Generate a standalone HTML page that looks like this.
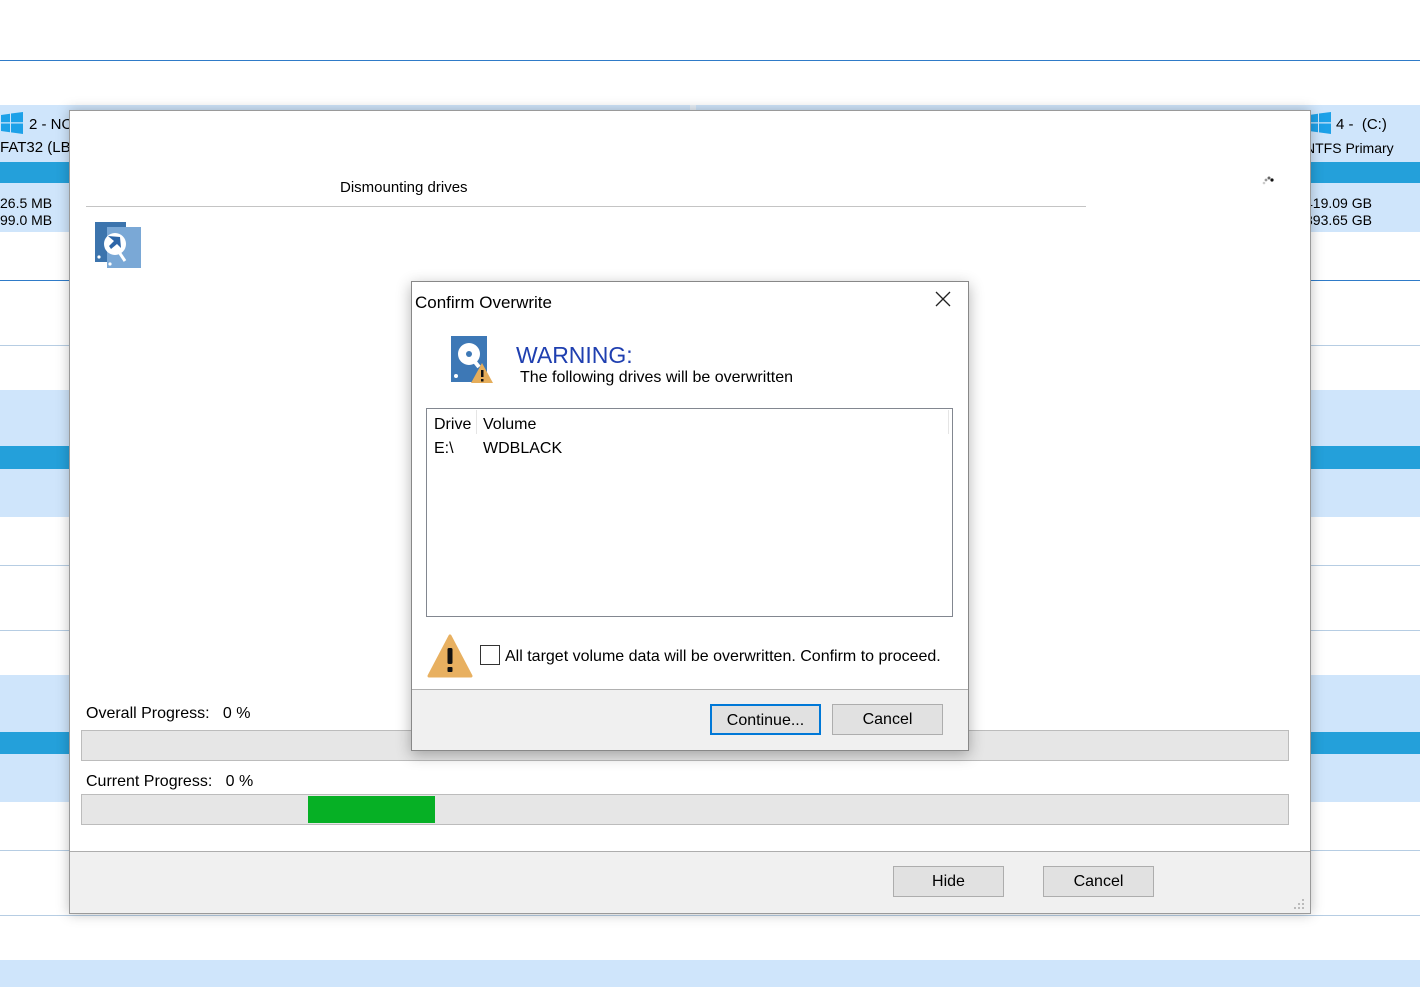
<!DOCTYPE html>
<html><head><meta charset="utf-8"><style>
*{margin:0;padding:0;box-sizing:border-box}
body{width:1420px;height:987px;position:relative;overflow:hidden;background:#fff;font-family:"Liberation Sans",sans-serif;color:#000}
.a{position:absolute}
.t{position:absolute;white-space:nowrap;font-size:15px;line-height:18px;margin-top:2px}
.lb{background:#cfe5fb}
.db{background:#24a0da}
.ln{height:1px;background:#b6cde3}
.btn{position:absolute;background:#e1e1e1;border:1px solid #adadad;font-size:16px;text-align:center;line-height:30px}
</style></head><body>
<div class="a" style="left:0;top:60px;width:1420px;height:1px;background:#2f7bc8"></div>
<div class="a lb" style="left:0;top:105px;width:1420px;height:57px"></div>
<div class="a" style="left:690px;top:105px;width:6px;height:6px;background:#e8f0f8"></div>
<div class="a db" style="left:0;top:162px;width:1420px;height:21px"></div>
<div class="a lb" style="left:0;top:183px;width:1420px;height:49px"></div>
<div class="a" style="left:0;top:280px;width:1420px;height:1px;background:#2f7bc8"></div>
<div class="a ln" style="left:0;top:345px;width:1420px"></div>
<div class="a lb" style="left:0;top:390px;width:1420px;height:56px"></div>
<div class="a db" style="left:0;top:446px;width:1420px;height:23px"></div>
<div class="a lb" style="left:0;top:469px;width:1420px;height:48px"></div>
<div class="a ln" style="left:0;top:565px;width:1420px"></div>
<div class="a ln" style="left:0;top:630px;width:1420px"></div>
<div class="a lb" style="left:0;top:675px;width:1420px;height:57px"></div>
<div class="a db" style="left:0;top:732px;width:1420px;height:22px"></div>
<div class="a lb" style="left:0;top:754px;width:1420px;height:48px"></div>
<div class="a ln" style="left:0;top:850px;width:1420px"></div>
<div class="a ln" style="left:0;top:915px;width:1420px"></div>
<div class="a lb" style="left:0;top:960px;width:1420px;height:27px"></div>
<svg class="a" style="left:1px;top:112px" width="22" height="22"><g fill="#1da1e8"><path d="M0 3l9-1.3v8.5H0z"/><path d="M10 1.5L22 0v10.2H10z"/><path d="M0 11.5h9v8.7L0 19z"/><path d="M10 11.5h12V22l-12-1.6z"/></g></svg>
<div class="t" style="left:29px;top:114px">2 - NO</div>
<div class="t" style="left:0;top:137px">FAT32 (LBA</div>
<div class="t" style="left:0;top:192px;font-size:14px">26.5 MB</div>
<div class="t" style="left:0;top:209px;font-size:14px">99.0 MB</div>
<svg class="a" style="left:1309px;top:112px" width="22" height="22"><g fill="#1da1e8"><path d="M0 3l9-1.3v8.5H0z"/><path d="M10 1.5L22 0v10.2H10z"/><path d="M0 11.5h9v8.7L0 19z"/><path d="M10 11.5h12V22l-12-1.6z"/></g></svg>
<div class="t" style="left:1336px;top:114px">4 -&nbsp; (C:)</div>
<div class="t" style="left:1305px;top:137px;font-size:14px">NTFS Primary</div>
<div class="t" style="left:1305px;top:192px;font-size:14px">419.09 GB</div>
<div class="t" style="left:1305px;top:209px;font-size:14px">393.65 GB</div>
<div class="a" style="left:69px;top:110px;width:1242px;height:804px;background:#fff;border:1px solid #9a9a9a;box-shadow:0 0 12px rgba(0,0,0,.25)"></div>
<div class="t" style="left:340px;top:177px;font-size:15px">Dismounting drives</div>
<div class="a" style="left:86px;top:206px;width:1000px;height:1px;background:#c4c4c4"></div>
<svg class="a" style="left:1262px;top:175px" width="16" height="10"><circle cx="2" cy="8" r="1.3" fill="#ccc"/><circle cx="4" cy="5" r="1.4" fill="#999"/><circle cx="7" cy="3" r="1.5" fill="#666"/><circle cx="10" cy="5" r="1.6" fill="#111"/></svg>
<svg class="a" style="left:95px;top:221px" width="46" height="48"><rect x="0" y="1" width="31" height="40" fill="#3c74ad"/><rect x="12" y="6" width="34" height="41" fill="#7aa8d6"/><circle cx="20" cy="23" r="11" fill="#fff"/><path d="M13 15l12 1 1 11-4-4-6 5-2-3 5-5z" fill="#2d66a8"/><path d="M22 28l8 12" stroke="#fff" stroke-width="3"/><circle cx="4" cy="36" r="1.6" fill="#fff"/><circle cx="15" cy="43" r="1.6" fill="#fff"/></svg>
<div class="t" style="left:86px;top:703px;font-size:16px">Overall Progress:&nbsp;&nbsp; 0 %</div>
<div class="a" style="left:81px;top:730px;width:1208px;height:31px;background:#e6e6e6;border:1px solid #bcbcbc"></div>
<div class="t" style="left:86px;top:771px;font-size:16px">Current Progress:&nbsp;&nbsp; 0 %</div>
<div class="a" style="left:81px;top:794px;width:1208px;height:31px;background:#e6e6e6;border:1px solid #bcbcbc"></div>
<div class="a" style="left:308px;top:796px;width:127px;height:27px;background:#06b025"></div>
<div class="a" style="left:70px;top:851px;width:1240px;height:62px;background:#f0f0f0;border-top:1px solid #adadad"></div>
<div class="btn" style="left:893px;top:866px;width:111px;height:31px">Hide</div>
<div class="btn" style="left:1043px;top:866px;width:111px;height:31px">Cancel</div>
<svg class="a" style="left:1294px;top:899px" width="12" height="12"><g fill="#bbb"><rect x="8" y="0" width="2" height="2"/><rect x="4" y="4" width="2" height="2"/><rect x="8" y="4" width="2" height="2"/><rect x="0" y="8" width="2" height="2"/><rect x="4" y="8" width="2" height="2"/><rect x="8" y="8" width="2" height="2"/></g></svg>
<div class="a" style="left:411px;top:281px;width:558px;height:470px;background:#fff;border:1px solid #888;box-shadow:0 4px 14px rgba(0,0,0,.3)"></div>
<div class="t" style="left:415px;top:291px;font-size:17px;line-height:20px">Confirm Overwrite</div>
<svg class="a" style="left:935px;top:291px" width="16" height="16"><path d="M1 1L15 15M15 1L1 15" stroke="#222" stroke-width="1.3"/></svg>
<svg class="a" style="left:451px;top:336px" width="42" height="48"><rect x="0" y="0" width="36" height="46" fill="#3d78b6"/><circle cx="18" cy="18" r="11" fill="#fff"/><circle cx="18" cy="18" r="3" fill="#3d78b6"/><path d="M20 21l8 10" stroke="#fff" stroke-width="4"/><circle cx="5" cy="40" r="2" fill="#fff"/><path d="M31 27l11 20H20z" fill="#e5ad5a"/><rect x="30" y="34" width="2.5" height="7" fill="#111"/><rect x="30" y="43" width="2.5" height="2.5" fill="#111"/></svg>
<div class="t" style="left:516px;top:340px;font-size:23px;line-height:26px;color:#1f3fb0">WARNING:</div>
<div class="t" style="left:520px;top:367px;font-size:16px">The following drives will be overwritten</div>
<div class="a" style="left:426px;top:408px;width:527px;height:209px;border:1px solid #828790"></div>
<div class="a" style="left:476px;top:410px;width:1px;height:24px;background:#e5e5e5"></div>
<div class="a" style="left:948px;top:410px;width:1px;height:24px;background:#e5e5e5"></div>
<div class="t" style="left:434px;top:414px;font-size:16px">Drive</div>
<div class="t" style="left:483px;top:414px;font-size:16px">Volume</div>
<div class="t" style="left:434px;top:438px;font-size:16px">E:\</div>
<div class="t" style="left:483px;top:438px;font-size:16px">WDBLACK</div>
<svg class="a" style="left:427px;top:634px" width="46" height="44"><path d="M23 2L44 42H2z" fill="#e8b060" stroke="#e8b060" stroke-width="3" stroke-linejoin="round"/><rect x="20.5" y="14" width="5" height="16" rx="1.5" fill="#111"/><rect x="20.5" y="33" width="5" height="5" rx="1" fill="#111"/></svg>
<div class="a" style="left:480px;top:645px;width:20px;height:20px;border:1px solid #333;background:#fff"></div>
<div class="t" style="left:505px;top:646px;font-size:16px">All target volume data will be overwritten. Confirm to proceed.</div>
<div class="a" style="left:412px;top:689px;width:556px;height:61px;background:#f0f0f0;border-top:1px solid #b0b0b0"></div>
<div class="btn" style="left:710px;top:704px;width:111px;height:31px;border:2px solid #0078d7;line-height:29px">Continue...</div>
<div class="btn" style="left:832px;top:704px;width:111px;height:31px">Cancel</div>
</body></html>
